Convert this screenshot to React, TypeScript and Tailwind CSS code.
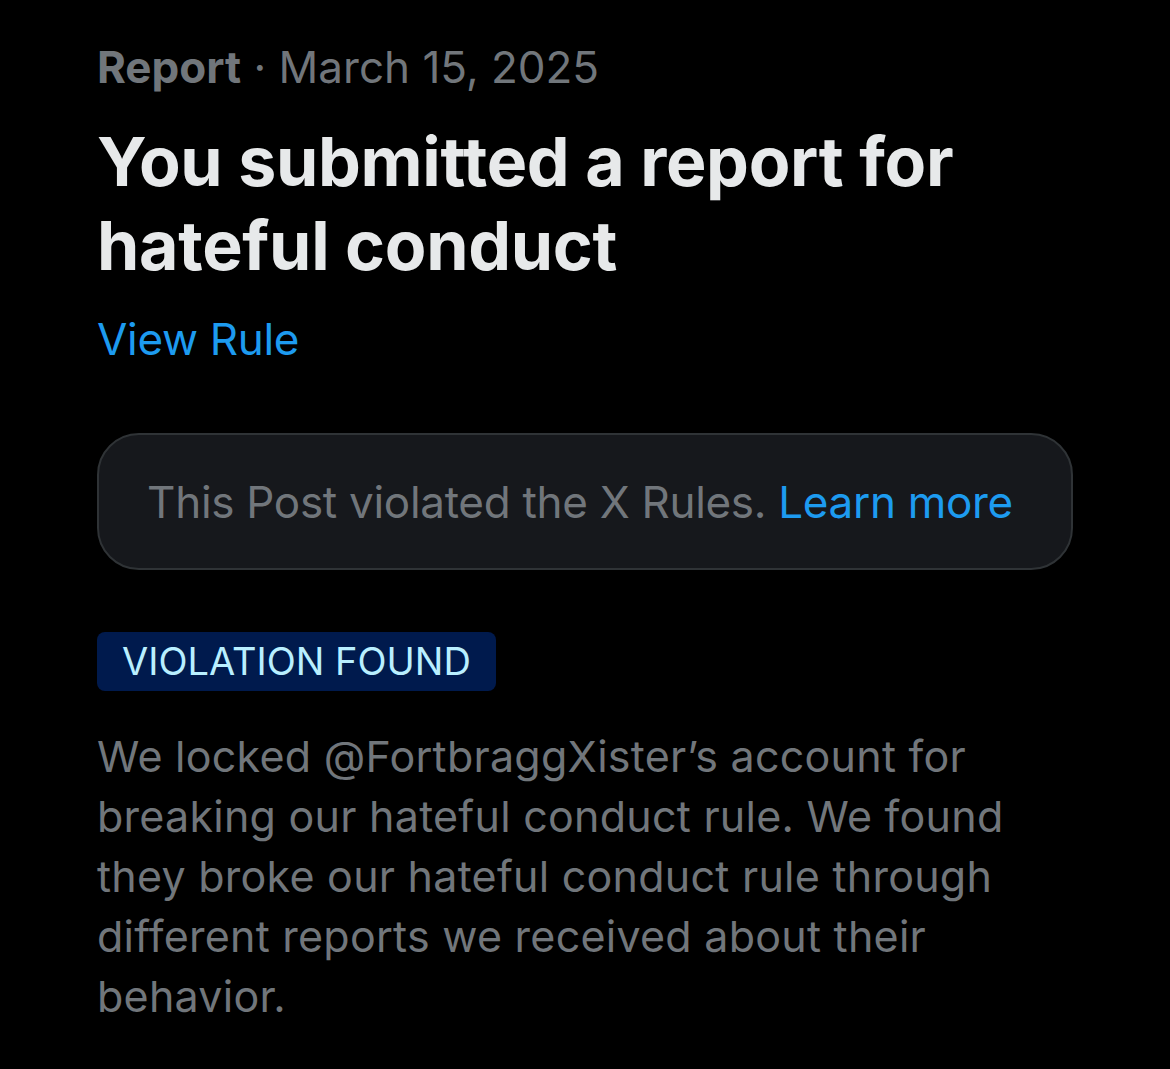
import React from 'react';

const App: React.FC = () => {
  return (
    <div
      className="min-h-[1069px] w-[1170px] bg-black px-[97px] pt-[37px]"
      style={{ fontFamily: 'Inter, "Noto Sans", sans-serif' }}
    >
      <div className="text-[44px] leading-[60px] text-[#71767b]">
        <span className="font-bold">Report</span>
        <span> · March 15, 2025</span>
      </div>

      <h1 className="mt-[22px] text-[68px] font-bold leading-[84px] tracking-[-0.3px] text-[#e7e9ea]">
        You submitted a report for hateful conduct
      </h1>

      <div className="mt-[24px] text-[44px] leading-[56px] tracking-[-0.3px] text-[#1d9bf0]">View Rule</div>

      <div className="mt-[66px] flex h-[137px] items-center justify-center rounded-[42px] border-2 border-[#2f3336] bg-[#16181c] pr-[10px] text-[44px] tracking-[-0.3px]">
        <span className="text-[#71767b]">This Post violated the X Rules.</span>
        <span className="ml-[12px] text-[#1d9bf0]">Learn more</span>
      </div>

      <div className="mt-[62px] inline-flex h-[59px] items-center rounded-[8px] bg-[#001a4d] px-[25px] text-[38px] text-[#b9efff]">
        VIOLATION FOUND
      </div>

      <p className="mt-[35px] text-[43px] leading-[60px] tracking-[0.25px] text-[#71767b]">
        We locked @FortbraggXister’s account for breaking our hateful conduct rule. We found they broke our hateful
        conduct rule through different reports we received about their behavior.
      </p>
    </div>
  );
};

export default App;
